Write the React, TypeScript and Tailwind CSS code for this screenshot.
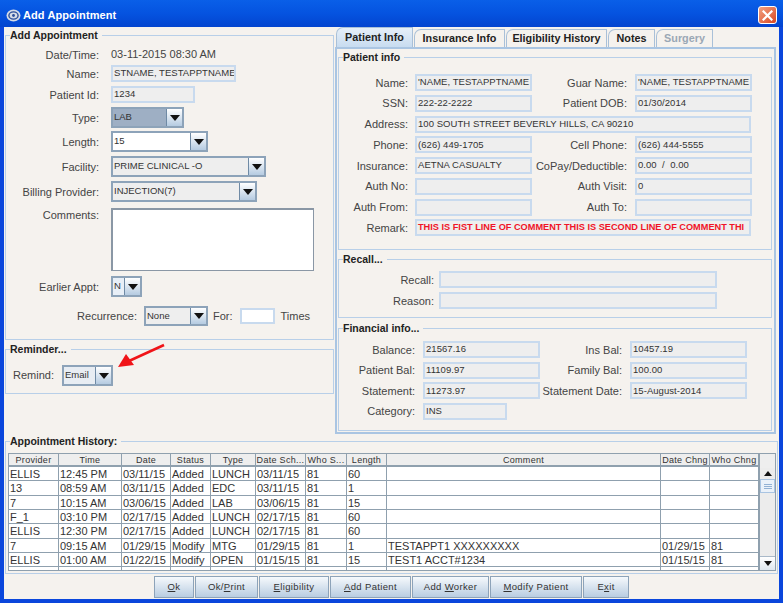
import type { ReactNode } from "react";

const font = "[font-family:'Liberation_Sans',Arial,sans-serif]";

const historyCols =
  "grid-cols-[50px_63px_49px_40px_45px_50px_41px_40px_274px_49px_49px]";

const headers = [
  "Provider", "Time", "Date", "Status", "Type", "Date Sch...", "Who S...",
  "Length", "Comment", "Date Chng", "Who Chng",
];

const history = [
  ["ELLIS", "12:45 PM", "03/11/15", "Added", "LUNCH", "03/11/15", "81", "60", "", "", ""],
  ["13", "08:59 AM", "03/11/15", "Added", "EDC", "03/11/15", "81", "1", "", "", ""],
  ["7", "10:15 AM", "03/06/15", "Added", "LAB", "03/06/15", "81", "15", "", "", ""],
  ["F_1", "03:10 PM", "02/17/15", "Added", "LUNCH", "02/17/15", "81", "60", "", "", ""],
  ["ELLIS", "12:30 PM", "02/17/15", "Added", "LUNCH", "02/17/15", "81", "60", "", "", ""],
  ["7", "09:15 AM", "01/29/15", "Modify", "MTG", "01/29/15", "81", "1", "TESTAPPT1 XXXXXXXXX", "01/29/15", "81"],
  ["ELLIS", "01:00 AM", "01/22/15", "Modify", "OPEN", "01/15/15", "81", "15", "TEST1 ACCT#1234", "01/15/15", "81"],
];

function Group({ title, className, children }: { title: string; className: string; children: ReactNode }) {
  return (
    <fieldset className={`min-w-0 border border-[#b8cfe8] ${className}`}>
      <legend className="ml-[4px] bg-[#f5f2ee] pr-[4px] text-[10.5px] font-bold leading-[14px] text-[#222]">
        {title}
      </legend>
      {children}
    </fieldset>
  );
}

function Label({ w, children }: { w: string; children: ReactNode }) {
  return <span className={`${w} shrink-0 whitespace-nowrap text-right text-[11px] leading-[14px] text-[#444]`}>{children}</span>;
}

function Field({ w, value, tone }: { w: string; value?: string; tone?: string }) {
  return (
    <div
      className={`${w} flex h-[17px] shrink-0 items-center overflow-hidden whitespace-nowrap border-2 border-[#c8daee] bg-[#eeeeee] pl-[1px] ${tone ?? "text-[9.5px] tracking-[0.05px] text-[#333]"}`}
    >
      {value}
    </div>
  );
}

function Combo({ w, value, bg, small }: { w: string; value: string; bg?: string; small?: boolean }) {
  return (
    <div className={`${w} flex ${small ? "h-[20px]" : "h-[21px]"} shrink-0 border-2 border-[#8da3b9]`}>
      <div className={`flex min-w-0 flex-1 items-center overflow-hidden whitespace-nowrap pl-[1px] text-[9.5px] text-[#333] ${bg ?? "bg-[#eeeeee]"}`}>
        {value}
      </div>
      <div className="flex w-[16px] shrink-0 items-center justify-center border-l border-[#6f8aa5] bg-gradient-to-b from-white to-[#b5cbe1]">
        <svg width="10" height="6" viewBox="0 0 10 6"><path d="M0 0h10L5 6z" fill="#111" /></svg>
      </div>
    </div>
  );
}

function TabItem({ label, w, active, disabled }: { label: string; w: string; active?: boolean; disabled?: boolean }) {
  return (
    <div
      className={`${w} flex ${active ? "h-[20px] bg-gradient-to-b from-[#e6eff8] to-[#c8dcf0]" : "h-[18px] bg-[#f5f2ee]"} shrink-0 items-center justify-center rounded-tl-[7px] border border-b-0 border-[#a9c0d8] text-[10.8px] font-bold ${disabled ? "text-[#9aa7b5]" : "text-[#222]"}`}
    >
      {label}
    </div>
  );
}

function ActionButton({ w, pre, mn, post }: { w: string; pre?: string; mn: string; post?: string }) {
  return (
    <button className={`${w} h-[22px] shrink-0 border border-[#8da3b9] bg-gradient-to-b from-[#f6f9fc] to-[#b9cde1] text-[9.5px] tracking-[0.35px] text-[#333]`}>
      {pre}
      <span className="underline">{mn}</span>
      {post}
    </button>
  );
}

export default function App() {
  return (
    <div className={`relative flex h-[603px] w-[783px] flex-col overflow-hidden bg-[#0a46dc] ${font}`}>
      {/* Title bar */}
      <div className="flex h-[27px] shrink-0 items-center bg-gradient-to-b from-[#0a5fe8] via-[#0553e0] to-[#0344cf] pl-[6px] pr-[6px] pt-[3px]">
        <svg width="15" height="15" viewBox="0 0 15 15">
          <ellipse cx="7.5" cy="7.5" rx="7" ry="6" fill="#d5dbe6" />
          <ellipse cx="7.5" cy="7.5" rx="4.6" ry="3.6" fill="none" stroke="#2b4f9a" strokeWidth="1.4" />
          <circle cx="7.5" cy="7.5" r="1.4" fill="#2b4f9a" />
        </svg>
        <span className="ml-[2px] text-[11px] font-bold tracking-[0.1px] text-white">Add Appointment</span>
        <div className="ml-auto flex h-[18px] w-[19px] items-center justify-center rounded-[3px] border border-white bg-gradient-to-br from-[#f0a080] to-[#d8431c]">
          <svg width="11" height="11" viewBox="0 0 11 11">
            <path d="M1.5 1.5l8 8M9.5 1.5l-8 8" stroke="#fff" strokeWidth="2.2" strokeLinecap="square" />
          </svg>
        </div>
      </div>

      {/* Client area */}
      <div className="mx-[4px] flex h-[572px] flex-col bg-[#f5f2ee] pl-[1px] pr-[1px]">
        <div className="mt-[1px] flex h-[406px] shrink-0">
          {/* Left column */}
          <div className="flex w-[329px] shrink-0 flex-col">
            <Group title="Add Appointment" className="h-[312px] pt-[4px]">
              <div className="flex h-[17px] items-center">
                <Label w="w-[93px]">Date/Time:</Label>
                <span className="ml-[12px] text-[11px] text-[#444]">03-11-2015 08:30 AM</span>
              </div>
              <div className="mt-[2px] flex items-center gap-[12px]">
                <Label w="w-[93px]">Name:</Label>
                <Field w="w-[125px]" value="STNAME, TESTAPPTNAME" />
              </div>
              <div className="mt-[4px] flex items-center gap-[12px]">
                <Label w="w-[93px]">Patient Id:</Label>
                <Field w="w-[84px]" value="1234" />
              </div>
              <div className="mt-[4px] flex items-center gap-[12px]">
                <Label w="w-[93px]">Type:</Label>
                <Combo w="w-[73px]" value="LAB" bg="bg-[#9eafc4]" />
              </div>
              <div className="mt-[3px] flex items-center gap-[12px]">
                <Label w="w-[93px]">Length:</Label>
                <Combo w="w-[97px]" value="15" bg="bg-white" />
              </div>
              <div className="mt-[4px] flex items-center gap-[12px]">
                <Label w="w-[93px]">Facility:</Label>
                <Combo w="w-[155px]" value="PRIME CLINICAL -O" />
              </div>
              <div className="mt-[4px] flex items-center gap-[12px]">
                <Label w="w-[93px]">Billing Provider:</Label>
                <Combo w="w-[146px]" value="INJECTION(7)" />
              </div>
              <div className="mt-[6px] flex items-start gap-[12px]">
                <Label w="w-[93px]">Comments:</Label>
                <div className="h-[63px] w-[203px] border-2 border-b border-r border-[#8a97a5] bg-white" />
              </div>
              <div className="mt-[5px] flex items-center gap-[12px]">
                <Label w="w-[93px]">Earlier Appt:</Label>
                <Combo w="w-[31px]" value="N" bg="bg-[#e8eff7]" />
              </div>
              <div className="mt-[9px] flex items-center">
                <Label w="w-[131px]">Recurrence:</Label>
                <div className="ml-[7px]">
                  <Combo w="w-[64px]" value="None" small />
                </div>
                <span className="ml-[5px] text-[11px] text-[#444]">For:</span>
                <div className="ml-[7px] h-[16px] w-[35px] border-2 border-[#c8daee] bg-white" />
                <span className="ml-[6px] text-[11px] text-[#444]">Times</span>
              </div>
            </Group>

            <Group title="Reminder..." className="mt-[2px] h-[52px] pt-[9px]">
              <div className="flex items-center">
                <span className="ml-[7px] w-[41px] text-[11px] text-[#444]">Remind:</span>
                <div className="ml-[8px]">
                  <Combo w="w-[51px]" value="Email" bg="bg-[#e8edf3]" />
                </div>
              </div>
            </Group>
          </div>

          {/* Right column */}
          <div className="ml-[1px] flex w-[441px] shrink-0 flex-col">
            <div className="flex h-[19px] shrink-0 items-end gap-[1px] pl-[1px]">
              <TabItem label="Patient Info" w="w-[77px]" active />
              <TabItem label="Insurance Info" w="w-[91px]" />
              <TabItem label="Eligibility History" w="w-[101px]" />
              <TabItem label="Notes" w="w-[47px]" />
              <TabItem label="Surgery" w="w-[57px]" disabled />
            </div>
            <div className="flex h-[387px] flex-col gap-[2px] border-2 border-[#aac5e2] pl-[1px] pr-[2px] pt-[1px]">
              <Group title="Patient info" className="h-[200px] pt-[10px]">
                <div className="flex flex-col gap-[3.75px]">
                  <div className="flex items-center">
                    <Label w="w-[69px]">Name:</Label>
                    <span className="w-[7px]" />
                    <Field w="w-[117px]" value="'NAME, TESTAPPTNAME" />
                    <Label w="w-[95px]">Guar Name:</Label>
                    <span className="w-[8px]" />
                    <Field w="w-[117px]" value="'NAME, TESTAPPTNAME" />
                  </div>
                  <div className="flex items-center">
                    <Label w="w-[69px]">SSN:</Label>
                    <span className="w-[7px]" />
                    <Field w="w-[117px]" value="222-22-2222" />
                    <Label w="w-[95px]">Patient DOB:</Label>
                    <span className="w-[8px]" />
                    <Field w="w-[117px]" value="01/30/2014" />
                  </div>
                  <div className="flex items-center">
                    <Label w="w-[69px]">Address:</Label>
                    <span className="w-[7px]" />
                    <Field w="w-[336px]" value="100 SOUTH STREET BEVERLY HILLS, CA 90210" />
                  </div>
                  <div className="flex items-center">
                    <Label w="w-[69px]">Phone:</Label>
                    <span className="w-[7px]" />
                    <Field w="w-[117px]" value="(626) 449-1705" />
                    <Label w="w-[95px]">Cell Phone:</Label>
                    <span className="w-[8px]" />
                    <Field w="w-[117px]" value="(626) 444-5555" />
                  </div>
                  <div className="flex items-center">
                    <Label w="w-[69px]">Insurance:</Label>
                    <span className="w-[7px]" />
                    <Field w="w-[117px]" value="AETNA CASUALTY" />
                    <Label w="w-[95px]">CoPay/Deductible:</Label>
                    <span className="w-[8px]" />
                    <Field w="w-[117px]" value={"0.00\u00a0\u00a0/\u00a0\u00a00.00"} />
                  </div>
                  <div className="flex items-center">
                    <Label w="w-[69px]">Auth No:</Label>
                    <span className="w-[7px]" />
                    <Field w="w-[117px]" />
                    <Label w="w-[95px]">Auth Visit:</Label>
                    <span className="w-[8px]" />
                    <Field w="w-[117px]" value="0" />
                  </div>
                  <div className="flex items-center">
                    <Label w="w-[69px]">Auth From:</Label>
                    <span className="w-[7px]" />
                    <Field w="w-[117px]" />
                    <Label w="w-[95px]">Auth To:</Label>
                    <span className="w-[8px]" />
                    <Field w="w-[117px]" />
                  </div>
                  <div className="flex items-center">
                    <Label w="w-[69px]">Remark:</Label>
                    <span className="w-[7px]" />
                    <Field
                      w="w-[336px]"
                      tone="text-[9.2px] font-bold text-[#f01428]"
                      value="THIS IS FIST LINE OF COMMENT THIS IS SECOND LINE OF COMMENT THI"
                    />
                  </div>
                </div>
              </Group>

              <Group title="Recall..." className="h-[66px] pt-[5px]">
                <div className="flex flex-col gap-[4px]">
                  <div className="flex items-center gap-[5px]">
                    <Label w="w-[95px]">Recall:</Label>
                    <Field w="w-[278px]" />
                  </div>
                  <div className="flex items-center gap-[5px]">
                    <Label w="w-[95px]">Reason:</Label>
                    <Field w="w-[278px]" />
                  </div>
                </div>
              </Group>

              <Group title="Financial info..." className="mt-[1px] h-[110px] pt-[6px]">
                <div className="flex flex-col gap-[3.67px]">
                  <div className="flex items-center">
                    <Label w="w-[76px]">Balance:</Label>
                    <span className="w-[8px]" />
                    <Field w="w-[117px]" value="21567.16" />
                    <Label w="w-[82px]">Ins Bal:</Label>
                    <span className="w-[8px]" />
                    <Field w="w-[117px]" value="10457.19" />
                  </div>
                  <div className="flex items-center">
                    <Label w="w-[76px]">Patient Bal:</Label>
                    <span className="w-[8px]" />
                    <Field w="w-[117px]" value="11109.97" />
                    <Label w="w-[82px]">Family Bal:</Label>
                    <span className="w-[8px]" />
                    <Field w="w-[117px]" value="100.00" />
                  </div>
                  <div className="flex items-center">
                    <Label w="w-[76px]">Statement:</Label>
                    <span className="w-[8px]" />
                    <Field w="w-[117px]" value="11273.97" />
                    <Label w="w-[82px]">Statement Date:</Label>
                    <span className="w-[8px]" />
                    <Field w="w-[117px]" value="15-August-2014" />
                  </div>
                  <div className="flex items-center">
                    <Label w="w-[76px]">Category:</Label>
                    <span className="w-[8px]" />
                    <Field w="w-[84px]" value="INS" />
                  </div>
                </div>
              </Group>
            </div>
          </div>
        </div>

        {/* Appointment history */}
        <Group title="Appointment History:" className="h-[140px] shrink-0 pt-[5px]">
          <div className="ml-[2px] flex h-[118px] w-[768px] border border-[#8fa0ae] bg-white">
            <div className="w-[750px] shrink-0 overflow-hidden">
              <div className={`grid h-[13px] ${historyCols} border-b-2 border-[#8fa0ae] bg-[#eeeeee]`}>
                {headers.map((h) => (
                  <div
                    key={h}
                    className="overflow-hidden whitespace-nowrap border-r border-[#8fa0ae] text-center text-[9px] leading-[12px] tracking-[0.3px] text-[#333]"
                  >
                    {h}
                  </div>
                ))}
              </div>
              {[...history, history[0].map(() => "")].map((row, i) => (
                <div key={i} className={`grid h-[14.33px] ${historyCols} border-b border-[#8fa0ae]`}>
                  {row.map((cell, j) => (
                    <div
                      key={j}
                      className="overflow-hidden whitespace-nowrap border-r border-[#8fa0ae] pl-[1px] text-[11px] leading-[14px] text-[#333]"
                    >
                      {cell}
                    </div>
                  ))}
                </div>
              ))}
            </div>
            <div className="flex min-w-0 flex-1 flex-col border-l border-[#8fa0ae] bg-[#ececec]">
              <div className="h-[14px] shrink-0 bg-[#eeeeee]" />
              <div className="flex h-[11px] shrink-0 items-center justify-center">
                <svg width="8" height="5" viewBox="0 0 8 5"><path d="M0 5h8L4 0z" fill="#111" /></svg>
              </div>
              <div className="flex h-[14px] shrink-0 flex-col items-center justify-center gap-[1px] border border-[#a9c4e2] bg-[#eaf1f9]">
                <span className="h-px w-[8px] bg-[#92b1d4]" />
                <span className="h-px w-[8px] bg-[#92b1d4]" />
                <span className="h-px w-[8px] bg-[#92b1d4]" />
              </div>
              <div className="flex-1" />
              <div className="flex h-[14px] shrink-0 items-center justify-center border-t border-[#a9b9c9] bg-gradient-to-b from-white to-[#dfe7ef]">
                <svg width="8" height="5" viewBox="0 0 8 5"><path d="M0 0h8L4 5z" fill="#111" /></svg>
              </div>
            </div>
          </div>
        </Group>

        {/* Buttons */}
        <div className="mt-[2px] flex h-[22px] shrink-0 gap-[1px] pl-[149px]">
          <ActionButton w="w-[40px]" mn="O" post="k" />
          <ActionButton w="w-[63px]" pre="Ok/" mn="P" post="rint" />
          <ActionButton w="w-[70px]" mn="E" post="ligibility" />
          <ActionButton w="w-[81px]" mn="A" post="dd Patient" />
          <ActionButton w="w-[77px]" pre="Add " mn="W" post="orker" />
          <ActionButton w="w-[92px]" mn="M" post="odify Patient" />
          <ActionButton w="w-[46px]" pre="E" mn="x" post="it" />
        </div>
      </div>

      {/* Red annotation arrow */}
      <svg className="absolute left-[114px] top-[342px]" width="54" height="30" viewBox="0 0 54 30">
        <path d="M50 3 L15 19" stroke="#f01418" strokeWidth="2.6" />
        <path d="M4 25 L12 12 L20 23 Z" fill="#f01418" />
      </svg>
    </div>
  );
}
